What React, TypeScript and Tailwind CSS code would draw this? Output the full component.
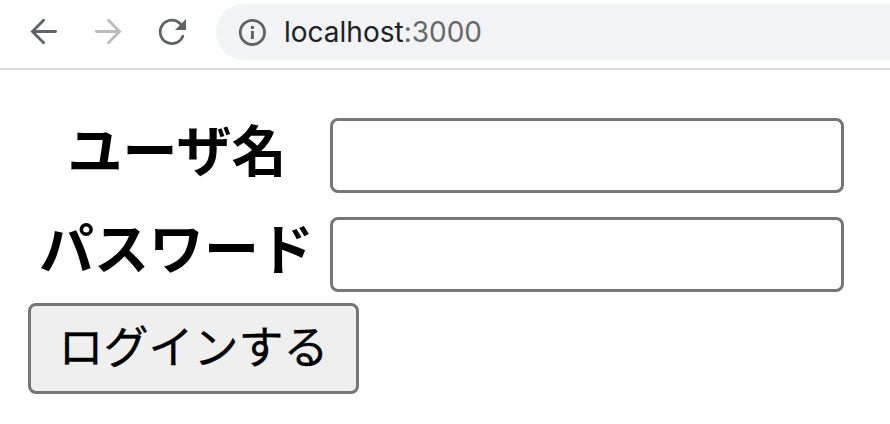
export default function App() {
  return (
    <div className="h-[424px] w-[890px] overflow-hidden bg-white font-['Noto_Sans_CJK_JP',sans-serif] text-black">
      <header className="flex h-[70px] items-start border-b-2 border-[#dadbdd] pt-1">
        <nav className="flex h-14 w-[216px] shrink-0 items-center pl-[28px]">
          <svg width="32" height="32" viewBox="28 16 32 32" fill="none" stroke="#5f6368" strokeWidth="2.8" strokeLinecap="round"><path d="M55.6 31.5H33M43.6 20.2L32.4 31.5L43.6 42.8" /></svg>
          <svg className="ml-8" width="32" height="32" viewBox="92 16 32 32" fill="none" stroke="#babcbe" strokeWidth="2.8" strokeLinecap="round"><path d="M96.4 31.5H119M108.4 20.2L119.6 31.5L108.4 42.8" /></svg>
          <svg className="ml-8" width="32" height="32" viewBox="156 16 32 32" fill="none"><path d="M182.8 36.2A11.7 11.7 0 1 1 180.3 23.7L183 26.4" stroke="#5f6368" strokeWidth="2.8" strokeLinecap="round" /><path d="M186 19V30H175Z" fill="#5f6368" /></svg>
        </nav>
        <div className="flex h-14 flex-1 items-center rounded-l-full bg-[#f1f3f4] pl-[22px]">
          <svg width="28" height="28" viewBox="238 18 28 28" fill="none" stroke="#5f6368" strokeWidth="2.8"><circle cx="252.4" cy="32.4" r="12.1" /><path d="M252.4 31V39M252.4 26V29" strokeWidth="3" /></svg>
          <span className="ml-[18px] font-['Inter',sans-serif] text-[28px] leading-none text-[#202124]">localhost<span className="text-[#66686b]">:3000</span></span>
        </div>
      </header>
      <form className="pl-7 pt-12">
        <div className="flex h-[75px] items-center">
          <label htmlFor="u" className="w-[302px] pb-[17px] pr-[4px] text-center text-[55px] font-bold leading-none">ユーザ名</label>
          <input id="u" className="h-[75px] w-[514px] rounded-[8px] border-[3px] border-[#767676] bg-white" />
        </div>
        <div className="mt-6 flex h-[75px] items-center">
          <label htmlFor="p" className="w-[302px] pb-[18px] pr-[5px] text-center text-[55px] font-bold leading-none">パスワード</label>
          <input id="p" type="password" className="h-[75px] w-[514px] rounded-[8px] border-[3px] border-[#767676] bg-white" />
        </div>
        <button type="button" className="mt-[11px] flex h-[91px] w-[331px] items-center justify-center rounded-[8px] border-[3px] border-[#767676] bg-[#efefef] pb-[8px] text-[45px] leading-none [-webkit-text-stroke:0.3px_black]">ログインする</button>
      </form>
    </div>
  );
}
